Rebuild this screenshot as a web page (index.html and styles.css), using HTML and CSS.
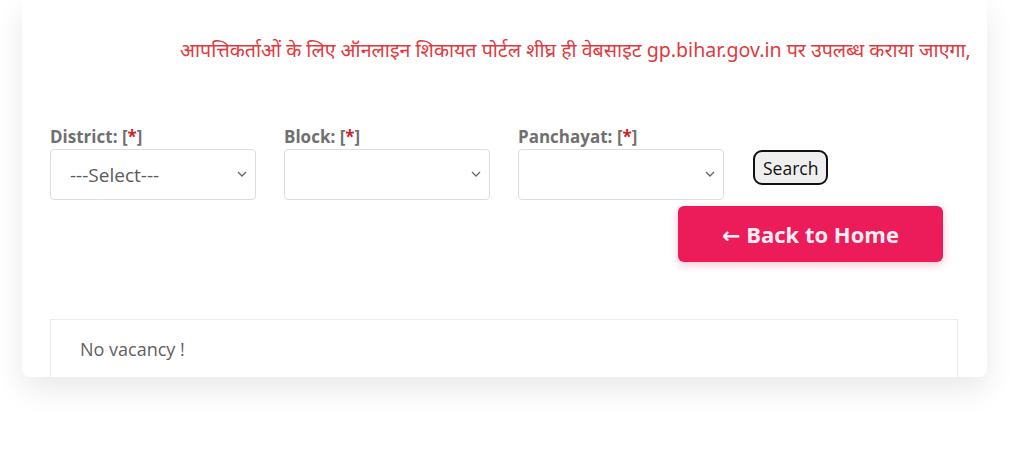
FILE: index.html
```html
<!DOCTYPE html>
<html lang="hi">
<head>
<meta charset="utf-8">
<title>Vacancy</title>
<link rel="stylesheet" href="styles.css">
</head>
<body>
<div class="card">
  <div class="marquee">
    <span class="marquee-text">आपत्तिकर्ताओं के लिए ऑनलाइन शिकायत पोर्टल शीघ्र ही वेबसाइट gp.bihar.gov.in पर उपलब्ध कराया जाएगा,</span>
  </div>
  <form class="filters">
    <div class="field">
      <label class="label">District: [<span class="req">*</span>]</label>
      <div class="select-wrap">
        <select class="select"><option>---Select---</option></select>
        <svg class="chev" width="10" height="6" viewBox="0 0 10 6"><path d="M1 1l4 4 4-4" fill="none" stroke="#666" stroke-width="1.3"/></svg>
      </div>
    </div>
    <div class="field">
      <label class="label">Block: [<span class="req">*</span>]</label>
      <div class="select-wrap">
        <select class="select"><option></option></select>
        <svg class="chev" width="10" height="6" viewBox="0 0 10 6"><path d="M1 1l4 4 4-4" fill="none" stroke="#666" stroke-width="1.3"/></svg>
      </div>
    </div>
    <div class="field">
      <label class="label">Panchayat: [<span class="req">*</span>]</label>
      <div class="select-wrap">
        <select class="select"><option></option></select>
        <svg class="chev" width="10" height="6" viewBox="0 0 10 6"><path d="M1 1l4 4 4-4" fill="none" stroke="#666" stroke-width="1.3"/></svg>
      </div>
    </div>
    <button type="button" class="search-btn">Search</button>
  </form>
  <div class="back-row">
    <a class="back-btn" href="#">← Back to Home</a>
  </div>
  <div class="result">No vacancy !</div>
</div>
</body>
</html>
```

FILE: styles.css
```css
html, body {
  margin: 0;
  padding: 0;
  background: #ffffff;
}
body {
  font-family: "Open Sans", "Noto Sans", "DejaVu Sans", sans-serif;
  height: 468px;
  overflow: hidden;
}
.card {
  margin: 0 37px 0 22px;
  height: 377px;
  background: #fff;
  border-radius: 0 0 8px 8px;
  box-shadow: 0 12px 30px rgba(0, 0, 0, 0.09);
  overflow: hidden;
  padding: 0 29px 0 28px;
  box-sizing: border-box;
}
.marquee {
  margin-right: -29px;
  padding-top: 36px;
  height: 34px;
  white-space: nowrap;
  overflow: hidden;
}
.marquee-text {
  display: inline-block;
  padding-left: 130px;
  color: #e03a3e;
  font-family: "Noto Sans", "Lato", sans-serif;
  font-size: 19.6px;
  line-height: 28px;
}
.filters {
  display: flex;
  align-items: flex-start;
  gap: 28px;
  margin-top: 56px;
}
.field {
  display: flex;
  flex-direction: column;
  width: 206px;
}
.label {
  font-weight: 700;
  font-size: 17px;
  line-height: 22px;
  color: #707070;
}
.req {
  color: #d0202a;
}
.select-wrap {
  position: relative;
  margin-top: 1px;
}
.select {
  appearance: none;
  -webkit-appearance: none;
  width: 206px;
  height: 51px;
  border: 1px solid #dedede;
  border-radius: 4px;
  background: #fff;
  padding: 0 0 0 19px;
  font-family: "Open Sans", "Noto Sans", sans-serif;
  font-size: 19px;
  color: #5a5a5a;
  box-sizing: border-box;
}
.chev {
  position: absolute;
  right: 9px;
  top: 22px;
  pointer-events: none;
}
.search-btn {
  margin-top: 24px;
  margin-left: 1px;
  height: 35px;
  padding: 0 8px;
  border: 2px solid #111;
  border-radius: 9px;
  background: #efefef;
  font-family: "Open Sans", "Noto Sans", sans-serif;
  font-size: 17.5px;
  color: #111;
}
.back-row {
  display: flex;
  justify-content: flex-end;
  padding-right: 15px;
  margin-top: 6px;
}
.back-btn {
  display: flex;
  align-items: center;
  justify-content: center;
  width: 265px;
  height: 56px;
  box-sizing: border-box;
  background: #ec1b5a;
  color: #fdeef3;
  border-radius: 6px;
  font-weight: 700;
  font-size: 22px;
  text-decoration: none;
  box-shadow: 0 3px 8px rgba(236, 27, 90, 0.25);
}
.result {
  margin-top: 57px;
  height: 60px;
  border: 1px solid #ececec;
  box-sizing: border-box;
  padding: 0 29px;
  display: flex;
  align-items: center;
  font-size: 18px;
  color: #5f5f5f;
  box-shadow: 0 2px 4px rgba(0, 0, 0, 0.03);
}
```
